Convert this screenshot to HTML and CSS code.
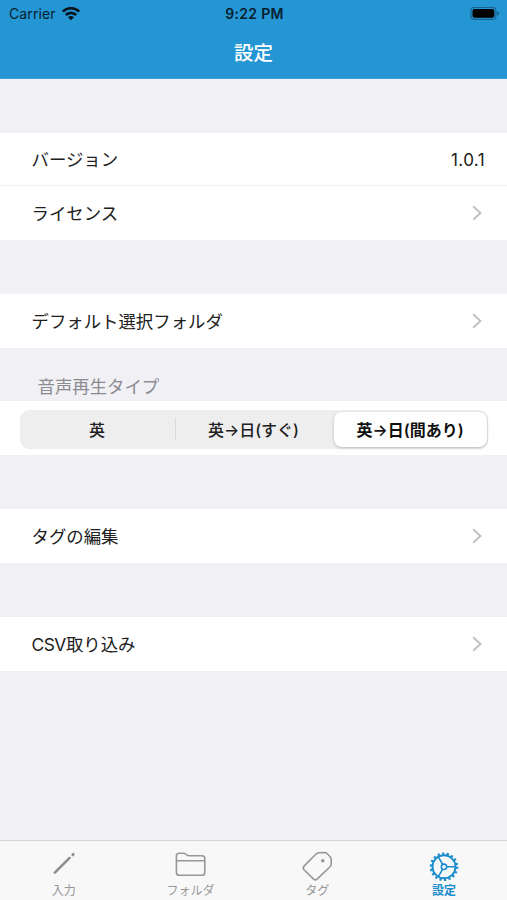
FILE: index.html
```html
<!DOCTYPE html>
<html lang="ja">
<head>
<meta charset="utf-8">
<title>設定</title>
<link rel="stylesheet" href="styles.css">
</head>
<body>
<div class="screen">
  <header class="header">
    <div class="status">
      <div class="carrier"><span>Carrier</span>
        <svg class="wifi" width="18" height="14" viewBox="0 0 18 14" fill="none" stroke="#07141c" stroke-width="2.6"><path d="M.8 4.6a11.5 11.5 0 0 1 16.4 0M3.8 8a7.4 7.4 0 0 1 10.4 0"/><path d="M9 13.2 6 10.3a4.4 4.4 0 0 1 6 0z" fill="#07141c" stroke="none"/></svg>
      </div>
      <div class="clock">9:22 PM</div>
      <svg class="battery" width="30" height="14" viewBox="0 0 30 14"><rect x=".9" y=".4" width="25" height="12" rx="3.5" fill="none" stroke="#17638e" stroke-width="1.2"/><rect x="2.5" y="2" width="21.8" height="8.8" rx="2" fill="#000"/><path d="M27.2 4.3q2 .7 2 2.1t-2 2.1z" fill="#17638e"/></svg>
    </div>
    <h1 class="title">設定</h1>
  </header>
  <main class="list">
    <section class="group version">
      <div class="row divided"><span>バージョン</span><span class="value">1.0.1</span></div>
      <div class="row"><span>ライセンス</span><svg class="chevron" width="10" height="16" viewBox="0 0 10 16"><path d="M1.2 1.2 8.4 8l-7.2 6.8"/></svg></div>
    </section>
    <section class="group folder">
      <div class="row"><span>デフォルト選択フォルダ</span><svg class="chevron" width="10" height="16" viewBox="0 0 10 16"><path d="M1.2 1.2 8.4 8l-7.2 6.8"/></svg></div>
    </section>
    <h2 class="caption">音声再生タイプ</h2>
    <section class="group playback">
      <div class="segments">
        <div class="segment">英</div>
        <div class="segment middle">英→日(すぐ)</div>
        <div class="segment selected">英→日(間あり)</div>
      </div>
    </section>
    <section class="group tags">
      <div class="row"><span>タグの編集</span><svg class="chevron" width="10" height="16" viewBox="0 0 10 16"><path d="M1.2 1.2 8.4 8l-7.2 6.8"/></svg></div>
    </section>
    <section class="group import">
      <div class="row"><span><span class="latin">CSV</span>取り込み</span><svg class="chevron" width="10" height="16" viewBox="0 0 10 16"><path d="M1.2 1.2 8.4 8l-7.2 6.8"/></svg></div>
    </section>
  </main>
  <nav class="tabs">
    <div class="tab">
      <svg width="32" height="32" viewBox="0 0 32 32" fill="none" stroke="#8f8f8f" stroke-linecap="round"><path d="M7.8 24.6 22.6 9.8" stroke-width="2.6"/><path d="M25.8 6.7l.3-.3" stroke-width="3"/></svg>
      <span>入力</span>
    </div>
    <div class="tab">
      <svg width="32" height="32" viewBox="0 0 32 32" fill="none" stroke="#979797" stroke-width="1.6" stroke-linejoin="round"><path d="M2.4 24.4V8q0-2.8 2.8-2.8h4q1.5 0 2.4.8l1.5 1.2q.7.6 2 .6h12.8q2.9 0 2.9 2.8v13.8q0 2.8-2.9 2.8H5.2q-2.8 0-2.8-2.8zM2.4 12.7h28.4"/></svg>
      <span>フォルダ</span>
    </div>
    <div class="tab">
      <svg width="32" height="32" viewBox="0 0 32 32" fill="none" stroke="#979797" stroke-width="1.6" stroke-linejoin="round"><path d="M14.8 6.3Q16.2 4.9 18.2 4.7l5-.2Q25 4.5 26.2 5.7l2.5 2.6Q30.2 9.5 30.2 11.5v4.3q0 1.8-1.4 3.2L16.1 31.1q-1.8 1.6-3.5 0L3 21.7q-1.7-1.9 0-3.6z"/><circle cx="21.8" cy="12.8" r="1.8" fill="#979797" stroke="none"/></svg>
      <span>タグ</span>
    </div>
    <div class="tab active">
      <svg width="32" height="32" viewBox="-16 -16 32 32" fill="none" stroke="#198ccd"><circle cy="2.8" r="13.2" stroke-width="2.2" stroke-dasharray="2.2 2.408"/><circle cy="2.8" r="11.5" stroke-width="1.9"/><circle cy="2.8" r="2.7" stroke-width="1.6"/><path d="M2.7 2.8H11M-1.3.5-5.5-6.8M-1.3 5.1l-4.2 7.3" stroke-width="1.6"/></svg>
      <span>設定</span>
    </div>
  </nav>
</div>
</body>
</html>
```
FILE: styles.css
```css
* { box-sizing: border-box; }
body { margin: 0; font-family: Inter, "Noto Sans CJK JP", sans-serif; color: #202020; }
.screen { width: 507px; height: 900px; display: flex; flex-direction: column; overflow: hidden; background: #f0f0f5; }
.header { flex: none; height: 79px; background: #2596d4; border-bottom: 1px solid #3c9dd5; }
.status { height: 27px; display: grid; grid-template-columns: 1fr auto 1fr; align-items: center; padding: 0 7px 0 9px; color: #07202e; }
.carrier { display: flex; align-items: center; gap: 6px; font-size: 14px; letter-spacing: .1px; }
.wifi { display: block; }
.clock { font-size: 14px; font-weight: 600; letter-spacing: .3px; }
.battery { justify-self: end; }
.title { margin: 0; height: 51px; line-height: 52px; text-align: center; font-size: 19.5px; font-weight: 500; color: #fff; }
.list { flex: 1; }
.group { background: #fff; }
.version { margin-top: 54px; }
.folder { margin-top: 54px; }
.row { height: 54px; display: flex; align-items: center; justify-content: space-between; padding: 0 25px 0 31.5px; font-size: 17.4px; line-height: 26px; }
.row > span { padding-top: 2px; }
.divided { height: 53px; border-bottom: 1px solid #f2f2f4; padding-right: 22px; }
.divided > span { padding-top: 2px; }
.value { font-size: 17px; letter-spacing: .4px; }
.latin { letter-spacing: -.5px; }
.chevron { fill: none; stroke: #c2c2c4; stroke-width: 2; }
.caption { margin: 0; height: 53px; padding: 26px 0 0 37.5px; font-size: 17.4px; line-height: 26px; font-weight: 400; color: #8b8b90; }
.playback { height: 54px; padding: 8.5px 19px 0 20px; }
.segments { display: grid; grid-template-columns: 155px 1fr 155px; height: 39px; border-radius: 9px; background: #eee; }
.segment { display: flex; align-items: center; justify-content: center; padding: 1px 1px 0 0; font-size: 16px; line-height: 24px; font-weight: 450; white-space: nowrap; }
.middle { position: relative; }
.middle::before { content: ""; position: absolute; left: 0; top: 8px; width: 1px; height: 22px; background: #d9d9dc; }
.selected { margin: 2px 1px 2px 1px; border-radius: 8px; background: #fff; box-shadow: 0 1px 3px rgba(0,0,0,.23); font-weight: 600; color: #111; }
.tags { margin-top: 54px; }
.import { margin-top: 54px; }
.tabs { flex: none; height: 60px; display: grid; grid-template-columns: repeat(4, 1fr); border-top: 1px solid #d7d7da; background: #f8f8f8; }
.tab { display: flex; flex-direction: column; align-items: center; padding-top: 7px; font-size: 12px; line-height: 18px; color: #969696; }
.tab svg { flex: none; overflow: visible; }
.tab span { margin: 2px 0 0 1px; }
.active { color: #198ccd; font-weight: 600; }
```
